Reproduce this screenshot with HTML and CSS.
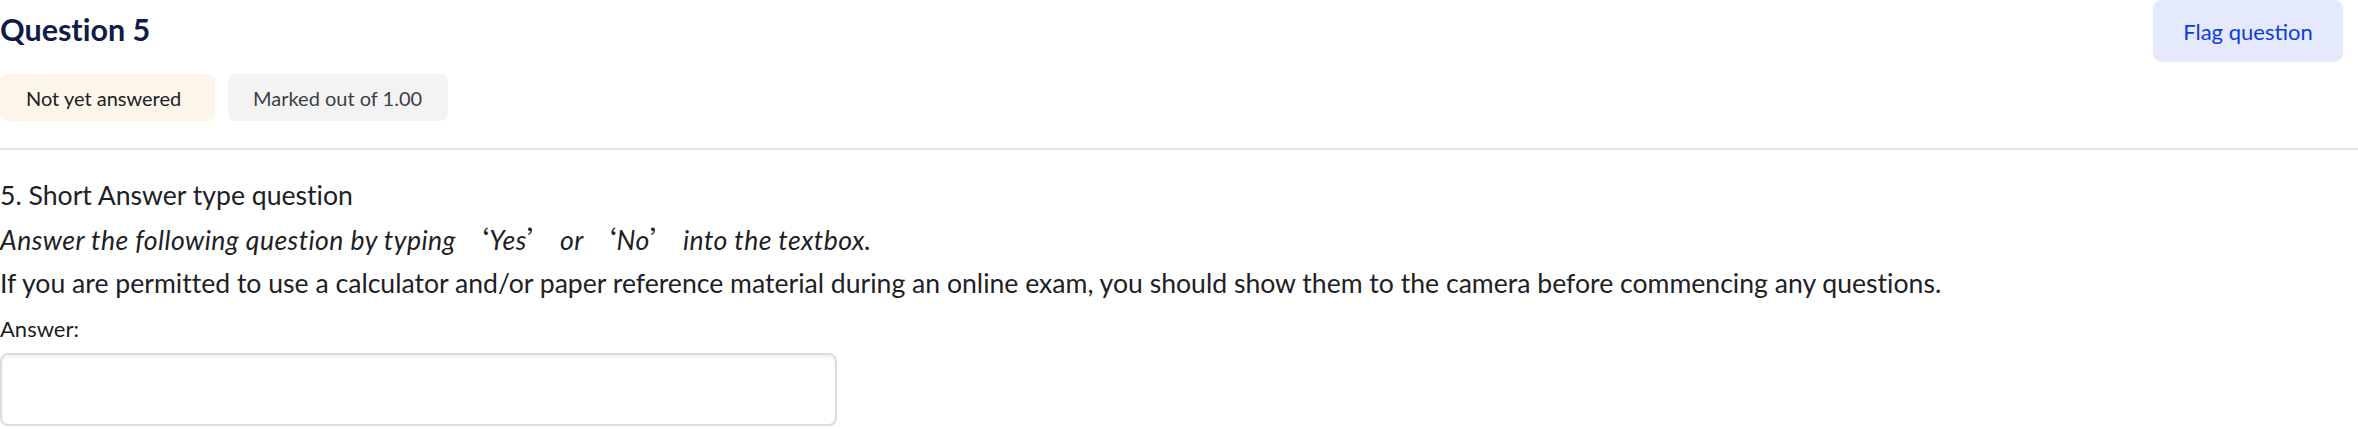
FILE: index.html
```html
<!DOCTYPE html>
<html lang="en">
<head>
<meta charset="utf-8">
<title>Question 5</title>
<link rel="stylesheet" href="styles.css">
</head>
<body>
<div class="question">
  <div class="info">
    <div class="info-left">
      <h2 class="qno">Question 5</h2>
      <div class="badges">
        <span class="badge badge-state">Not yet answered</span>
        <span class="badge badge-grade">Marked out of 1.00</span>
      </div>
    </div>
    <button class="flag-btn" type="button">Flag question</button>
  </div>
  <div class="content">
    <p class="line">5. Short Answer type question</p>
    <p class="line italic">Answer the following question by typing <span class="cjk">&#8216;</span>Yes<span class="cjk">&#8217;</span> or <span class="cjk">&#8216;</span>No<span class="cjk">&#8217;</span> into the textbox.</p>
    <p class="line">If you are permitted to use a calculator and/or paper reference material during an online exam, you should show them to the camera before commencing any questions.</p>
    <label class="answer-label" for="ans">Answer:</label>
    <input class="answer-input" id="ans" type="text">
  </div>
</div>
</body>
</html>
```
FILE: styles.css
```css
html, body {
  margin: 0;
  padding: 0;
  background: #ffffff;
}
body {
  font-family: "Lato", "Noto Sans", sans-serif;
  font-variant-ligatures: none;
  color: #1d2125;
}
.info {
  display: flex;
  justify-content: space-between;
  align-items: flex-start;
  padding-right: 15px;
  border-bottom: 2px solid #e5e5e5;
  height: 150px;
  box-sizing: border-box;
}
.qno {
  margin: 0;
  padding-top: 9px;
  font-size: 30.5px;
  line-height: 40px;
  font-weight: 700;
  color: #0f1c48;
}
.badges {
  display: flex;
  gap: 13px;
  margin-top: 25px;
}
.badge {
  display: inline-flex;
  align-items: center;
  box-sizing: border-box;
  height: 47px;
  padding: 0 0 0 26px;
  border-radius: 7px;
  font-size: 20px;
}
.badge-state {
  background: #fcf5ea;
  color: #1d2125;
  width: 215px;
}
.badge-grade {
  background: #f3f3f3;
  color: #3c3f43;
  width: 220px;
  padding-left: 25px;
}
.flag-btn {
  width: 190px;
  height: 62px;
  border: none;
  border-radius: 9px;
  background: #e5e9fd;
  color: #0f3cd6;
  font-family: inherit;
  font-size: 22px;
  padding: 0;
}
.content {
  padding-top: 24px;
}
.line {
  margin: 0;
  font-size: 26.6px;
  line-height: 43px;
  color: #1d2125;
}
.italic {
  font-style: italic;
  letter-spacing: 0.45px;
}
.cjk {
  font-family: "Noto Sans CJK SC", sans-serif;
  font-style: normal;
  letter-spacing: 0;
}
.answer-label {
  display: block;
  margin-top: 10px;
  font-size: 22px;
  line-height: 28px;
  color: #1d2125;
}
.answer-input {
  display: block;
  margin-top: 10px;
  width: 837px;
  height: 73px;
  box-sizing: border-box;
  border: 2px solid #dcdcdc;
  border-radius: 8px;
  box-shadow: inset 0 2px 3px rgba(0,0,0,0.06);
  background: #fff;
}
```
